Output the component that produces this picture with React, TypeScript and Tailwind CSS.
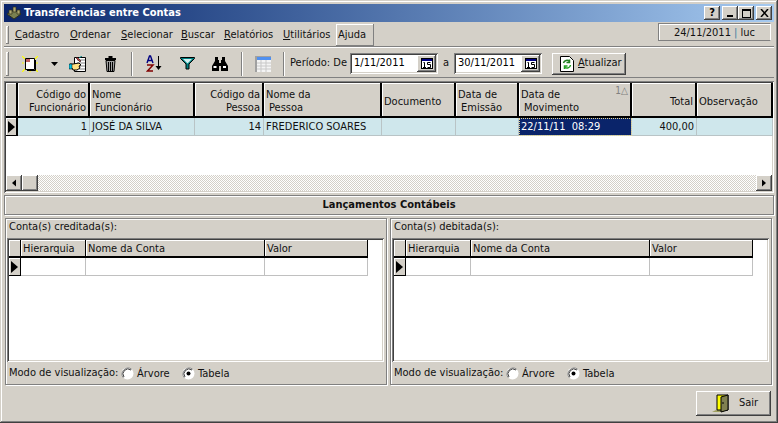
import React from "react";

const raised = "shadow-[inset_-1px_-1px_#404040,inset_1px_1px_#fff,inset_-2px_-2px_#808080]";
const thinUp = "shadow-[inset_-1px_-1px_#808080,inset_1px_1px_#fff]";
const sunken = "shadow-[inset_1px_1px_#808080,inset_-1px_-1px_#fff,inset_2px_2px_#404040,inset_-2px_-2px_#d4d0c8]";
const etched = "border border-[#808080] shadow-[inset_1px_1px_#fff,1px_1px_#fff]";

function Sep() {
  return <div className="w-[2px] h-[24px] shrink-0 border-l border-[#808080] bg-white" />;
}
function U({ c }: { c: string }) {
  return <span className="underline">{c}</span>;
}

function Arrow({ dir = "r", h = 12, w = 7 }: { dir?: "r" | "l"; h?: number; w?: number }) {
  return (
    <svg width={w} height={h} viewBox="0 0 7 12" className="block">
      <polygon points={dir === "r" ? "0,0 7,6 0,12" : "7,0 0,6 7,12"} fill="#000" />
    </svg>
  );
}

function CalBtn() {
  return (
    <div className={`w-[19px] h-[17px] ${raised} bg-[#d4d0c8] flex items-center justify-center shrink-0`}>
      <svg width="12" height="11" viewBox="0 0 12 11">
        <rect x="0.5" y="0.5" width="11" height="10" fill="#fff" stroke="#000" />
        <rect x="1" y="1" width="10" height="2" fill="#000080" />
        <path d="M2.500 4.500h1v5M2 9.500h3M6.500 4.500h3M6.500 4.500v2h3v3h-3" stroke="#000" fill="none" />
      </svg>
    </div>
  );
}

function DateField({ value }: { value: string }) {
  return (
    <div className={`w-[88px] h-[21px] bg-white flex items-center pl-[4px] pr-[2px] ${sunken}`}>
      <span className="flex-1 text-[11px] text-black">{value}</span>
      <CalBtn />
    </div>
  );
}

type Col = { w: number; a: string; b?: string; right?: boolean };
const cols: Col[] = [
  { w: 72, a: "Código do", b: "Funcionário", right: true },
  { w: 105, a: "Nome", b: "Funcionário" },
  { w: 69, a: "Código da", b: "Pessoa", right: true },
  { w: 118, a: "Nome da", b: "Pessoa" },
  { w: 74, a: "Documento" },
  { w: 63, a: "Data de", b: "Emissão" },
  { w: 113, a: "Data de", b: "Movimento" },
  { w: 65, a: "Total", right: true },
  { w: 76, a: "Observação" },
];
const cells = ["1", "JOSÉ DA SILVA", "14", "FREDERICO SOARES", "", "", "22/11/11  08:29", "400,00", ""];

function Header({ c, sort }: { c: Col; sort?: boolean }) {
  return (
    <div
      style={{ width: c.w }}
      className={`relative shrink-0 h-[35px] pt-[3px] bg-[#d4d0c8] border-r-2 border-b-2 border-black shadow-[inset_1px_1px_#fff] flex flex-col justify-center leading-[13px] text-[11px] text-[#111] px-[2px] ${c.right ? "items-end" : "items-start"}`}
    >
      <span>{c.a}</span>
      {c.b && <span className={c.right ? "" : "pl-[3px]"}>{c.b}</span>}
      {sort && (
        <span className="absolute right-[2px] top-[3px] text-[10px] leading-[10px] text-[#808080]">1△</span>
      )}
    </div>
  );
}

function MainGrid() {
  return (
    <div className={`h-[112px] bg-white ${sunken} p-[2px] mt-[3px] flex flex-col overflow-hidden`}>
      <div className="flex">
        <div className="w-[12px] h-[35px] bg-[#d4d0c8] border-r-2 border-b-2 border-black shadow-[inset_1px_1px_#fff] shrink-0" />
        {cols.map((c, i) => (
          <Header key={i} c={c} sort={i === 6} />
        ))}
      </div>
      <div className="flex h-[18px]">
        <div className="w-[12px] bg-[#d4d0c8] border-r-2 border-b border-black shadow-[inset_1px_1px_#fff] flex items-center justify-center shrink-0">
          <Arrow />
        </div>
        {cols.map((c, i) => (
          <div
            key={i}
            style={{ width: c.w }}
            className={`shrink-0 border-r border-b border-[#b9c4c6] text-[11px] leading-[16px] pt-[1px] px-[2px] whitespace-pre ${
              i === 6
                ? "bg-[#0a246a] text-white outline-1 outline-dotted outline-[#e8d890] -outline-offset-1"
                : "bg-[#cfe7ec] text-[#111]"
            } ${c.right ? "text-right" : ""}`}
          >
            {cells[i]}
          </div>
        ))}
      </div>
      <div className="flex-1" />
      <div className="h-[16px] flex bg-[repeating-conic-gradient(#d4d0c8_0_25%,#fff_0_50%)] bg-[length:2px_2px]">
        <div className={`w-[16px] bg-[#d4d0c8] ${raised} flex items-center justify-center`}>
          <Arrow dir="l" h={8} w={4} />
        </div>
        <div className={`w-[16px] bg-[#d4d0c8] ${raised}`} />
        <div className="flex-1" />
        <div className={`w-[16px] bg-[#d4d0c8] ${raised} flex items-center justify-center`}>
          <Arrow h={8} w={4} />
        </div>
      </div>
    </div>
  );
}

function SubHeader({ w, t }: { w: number; t: string }) {
  return (
    <div
      style={{ width: w }}
      className="shrink-0 h-[18px] pt-[1px] bg-[#d4d0c8] border-r border-b-2 border-black shadow-[inset_1px_1px_#fff] text-[11px] leading-[15px] text-[#111] px-[2px]"
    >
      {t}
    </div>
  );
}

function Radio({ on, label, w }: { on?: boolean; label: string; w: number }) {
  return (
    <div style={{ width: w }} className="flex items-center gap-[3px] shrink-0">
      <svg width="13" height="13" viewBox="0 0 13 13" className="shrink-0">
        <circle cx="6.500" cy="6.500" r="6" fill="#fff" />
        <path d="M2.300 10.700A6 6 0 0 1 10.700 2.300" stroke="#808080" fill="none" />
        <path d="M3 10A5 5 0 0 1 10 3" stroke="#404040" fill="none" />
        {on && <circle cx="6.500" cy="6.500" r="2" fill="#000" />}
      </svg>
      <span className="text-[11px] text-[#111] pt-[3px]">{label}</span>
    </div>
  );
}

function Panel({ title }: { title: string }) {
  return (
    <div className={`w-[382px] h-[167px] flex flex-col ${etched}`}>
      <div className="h-[19px] pl-[3px] text-[11px] leading-[16px] text-[#111]">{title}</div>
      <div className={`h-[124px] bg-white ml-[1px] mr-[2px] p-[2px] ${sunken}`}>
        <div className="flex">
          <div className="w-[12px] h-[18px] bg-[#d4d0c8] border-r border-b-2 border-black shadow-[inset_1px_1px_#fff] shrink-0" />
          <SubHeader w={65} t="Hierarquia" />
          <SubHeader w={179} t="Nome da Conta" />
          <SubHeader w={103} t="Valor" />
        </div>
        <div className="flex h-[18px]">
          <div className="w-[12px] bg-[#d4d0c8] border-r border-b border-black shadow-[inset_1px_1px_#fff] flex items-center justify-center shrink-0">
            <Arrow />
          </div>
          {[65, 179, 103].map((w, i) => (
            <div key={i} style={{ width: w }} className="shrink-0 border-r border-b border-[#c0c0c0]" />
          ))}
        </div>
      </div>
      <div className="flex items-center h-[22px] pl-[3px]">
        <span className="w-[112px] text-[11px] text-[#111] shrink-0">Modo de visualização:</span>
        <Radio label="Árvore" w={61} />
        <Radio on label="Tabela" w={60} />
      </div>
    </div>
  );
}

function NewIcon() {
  return (
    <svg width="16" height="16" viewBox="0 0 16 16">
      <path d="M0 0l3 3M16 0l-3 3M0 16l3-3M16 16l-3-3M8 14v2M0 7h2M14 7h2" stroke="#ffff00" strokeWidth="1.200" />
      <path d="M3.500 2.500h9v11h-9z" fill="#fff" stroke="#000" />
      <rect x="4" y="3" width="4" height="3" fill="#c06060" />
      <path d="M13.500 4v10.500H5" stroke="#000" fill="none" />
    </svg>
  );
}
function EditIcon() {
  return (
    <svg width="17" height="16" viewBox="0 0 17 16">
      <path d="M5.500 1.500h11v14h-11z" fill="#fff" stroke="#000" />
      <path d="M8 4h8M8 7h8M10 10h6M10 13h6" stroke="#808080" />
      <path d="M8 1l4 4-1 1-4-4z" fill="#c04040" stroke="#000" strokeWidth=".5" />
      <path d="M10 2l3-2" stroke="#008080" />
      <path d="M1 8h3l6-1 2 2-2 1 1 2-3 2H4l-1-2H1z" fill="#ffe080" stroke="#000" />
      <rect x="0" y="8" width="3" height="5" fill="#00c0e0" stroke="#000" strokeWidth=".5" />
    </svg>
  );
}
function TrashIcon() {
  return (
    <svg width="13" height="16" viewBox="0 0 13 16">
      <path d="M4.500 1h4M1 3h11" stroke="#000" strokeWidth="2" />
      <path d="M2 4.500h9l-1 11H3z" fill="#a0a0a0" stroke="#000" />
      <path d="M4.500 6v9M6.500 6v9M8.500 6v9" stroke="#000" />
    </svg>
  );
}
function AzIcon() {
  return (
    <svg width="17" height="17" viewBox="0 0 17 17">
      <path d="M1 8l2.500-7h1L7 8M2 5.500h4" stroke="#000080" strokeWidth="1.400" fill="none" />
      <path d="M1 10h6L1.500 16H7" stroke="#800000" strokeWidth="1.500" fill="none" />
      <path d="M12.500 1v11" stroke="#000" strokeWidth="1" />
      <path d="M9.500 11h6l-3 4z" fill="#000" />
    </svg>
  );
}
function FunnelIcon() {
  return (
    <svg width="15" height="13" viewBox="0 0 15 13">
      <path d="M0.500 0.500h14v1L9 7v5H6V7L0.500 1.500z" fill="#008080" stroke="#000" />
      <path d="M3 2h9L7.500 6.500z" fill="#d4f0f0" />
    </svg>
  );
}
function BinocularIcon() {
  return (
    <svg width="16" height="14" viewBox="0 0 16 14">
      <path d="M3 0h3v3h1v3h2V3h1V0h3v4l3 5v5H9V9H7v5H0V9l3-5z" fill="#000" />
      <rect x="1.500" y="9" width="3" height="2" fill="#fff" />
      <rect x="11" y="9" width="3" height="2" fill="#fff" />
    </svg>
  );
}
function TableIcon() {
  return (
    <svg width="16" height="16" viewBox="0 0 16 16">
      <rect x="0" y="0" width="16" height="16" fill="#a0a0a0" />
      <rect x="2" y="1" width="14" height="3" fill="#5090f0" />
      <rect x="2" y="4" width="14" height="12" fill="#f4f4f4" />
      <path d="M2 7h14M2 10h14M2 13h14M6 4v12M11 4v12" stroke="#c8c8c8" />
    </svg>
  );
}
function RefreshIcon() {
  return (
    <svg width="14" height="16" viewBox="0 0 14 16">
      <path d="M0.500 0.500h9l4 4v11h-13z" fill="#fff" stroke="#000" />
      <path d="M3.500 7a3.500 3.500 0 0 1 6-1.500M9.500 3.500v3h-3" stroke="#208020" strokeWidth="1.500" fill="none" />
      <path d="M10.500 9a3.500 3.500 0 0 1-6 2M4.500 13v-3h3" stroke="#20a020" strokeWidth="1.500" fill="none" />
    </svg>
  );
}
function DoorIcon() {
  return (
    <svg width="17" height="19" viewBox="0 0 17 19">
      <path d="M0 18l4-2h8v2z" fill="#a0a060" />
      <path d="M5 1h11v15H5z" fill="#ffff00" stroke="#000" />
      <path d="M9 3l7-2v15l-7 2z" fill="#808050" stroke="#000" />
      <rect x="10.500" y="8" width="1" height="2" fill="#000" />
    </svg>
  );
}

function ToolIcon({ w, children }: { w: number; children: React.ReactNode }) {
  return <div style={{ width: w }} className="h-[24px] flex items-center justify-center shrink-0">{children}</div>;
}

function WinBtn({ children }: { children: React.ReactNode }) {
  return (
    <div className={`w-[16px] h-[14px] bg-[#d4d0c8] ${raised} flex items-center justify-center shrink-0`}>
      {children}
    </div>
  );
}

export default function App() {
  return (
    <div
      className="w-[778px] h-[423px] bg-[#d4d0c8] p-[4px] overflow-hidden flex flex-col shadow-[inset_-1px_-1px_#404040,inset_1px_1px_#d4d0c8,inset_-2px_-2px_#808080,inset_2px_2px_#fff] text-[#111]"
      style={{ fontFamily: '"DejaVu Sans Condensed", "DejaVu Sans", sans-serif' }}
    >
      {/* Title bar */}
      <div className="h-[18px] bg-gradient-to-r from-[#0a246a] to-[#a6caf0] flex items-center pl-[2px] pr-[2px] shrink-0">
        <svg width="16" height="16" viewBox="0 0 16 16" className="shrink-0">
          <path d="M1 9l7-4 7 4-7 5z" fill="#7a8050" stroke="#30301a" />
          <path d="M3 5h3v4H3zM7 2h3v5H7zM11 5h3v4h-3z" fill="#b0a870" stroke="#30301a" strokeWidth=".7" />
        </svg>
        <span className="ml-[2px] text-white font-bold text-[11px] leading-[16px]">
          Transferências entre Contas
        </span>
        <div className="ml-auto flex items-center">
          <WinBtn>
            <span className="text-[11px] leading-[12px] font-bold text-black">?</span>
          </WinBtn>
          <div className="w-[2px]" />
          <WinBtn>
            <div className="w-[6px] h-[2px] bg-black mt-[6px]" />
          </WinBtn>
          <WinBtn>
            <div className="w-[9px] h-[9px] border border-black border-t-2" />
          </WinBtn>
          <div className="w-[2px]" />
          <WinBtn>
            <svg width="9" height="8" viewBox="0 0 9 8">
              <path d="M1 0l7 8M8 0l-7 8" stroke="#000" strokeWidth="1.500" />
            </svg>
          </WinBtn>
        </div>
      </div>

      {/* Menu */}
      <div className="h-[25px] flex items-end pl-[2px] pr-[3px] border-b border-[#808080] shrink-0">
        <div className={`w-[3px] h-[18px] mb-[2px] ${thinUp} shrink-0`} />
        <div className="flex items-center text-[11px] text-[#111] ml-[6px] h-[22px] whitespace-nowrap">
          <span className="w-[55px]"><U c="C" />adastro</span>
          <span className="w-[51px]"><U c="O" />rdenar</span>
          <span className="w-[60px]"><U c="S" />elecionar</span>
          <span className="w-[43px]"><U c="B" />uscar</span>
          <span className="w-[59px]"><U c="R" />elatórios</span>
          <span className="w-[53px]"><U c="U" />tilitários</span>
          <span className={`h-[22px] px-[2px] w-[38px] leading-[22px] ${thinUp}`}>Ajuda</span>
        </div>
        <div className="ml-auto w-[113px] h-[18px] mb-[5px] text-[11px] leading-[17px] text-center border border-[#808080] border-r-white shadow-[inset_1px_1px_#fff]">
          24/11/2011 <span className="text-[#4080a0]">|</span> luc
        </div>
      </div>

      {/* Toolbar */}
      <div className="h-[31px] flex items-center pt-[2px] pl-[2px] border-t border-white border-b border-b-[#808080] shrink-0">
        <div className={`w-[3px] h-[24px] ${thinUp} shrink-0`} />
        <ToolIcon w={41}><NewIcon /></ToolIcon>
        <svg width="7" height="4" viewBox="0 0 7 4" className="ml-[1px] shrink-0"><path d="M0 0h7L3.500 4z" fill="#000" /></svg>
        <ToolIcon w={38}><EditIcon /></ToolIcon>
        <ToolIcon w={28}><TrashIcon /></ToolIcon>
        <div className="w-[7px]" />
        <Sep />
        <ToolIcon w={42}><AzIcon /></ToolIcon>
        <ToolIcon w={24}><FunnelIcon /></ToolIcon>
        <ToolIcon w={42}><BinocularIcon /></ToolIcon>
        <Sep />
        <ToolIcon w={40}><TableIcon /></ToolIcon>
        <Sep />
        <span className="ml-[5px] w-[60px] text-[11px] shrink-0">Período: De</span>
        <DateField value="1/11/2011" />
        <span className="w-[16px] text-center text-[11px] shrink-0">a</span>
        <DateField value="30/11/2011" />
        <div className={`ml-[10px] w-[74px] h-[22px] bg-[#d4d0c8] ${raised} flex items-center pl-[8px] gap-[4px] text-[11px]`}>
          <RefreshIcon />
          <span><U c="A" />tualizar</span>
        </div>
      </div>

      <MainGrid />

      {/* Section title */}
      <div className={`h-[20px] mt-[2px] ${etched} flex items-center justify-center font-bold text-[11px] shrink-0`}>
        Lançamentos Contábeis
      </div>

      {/* Panels */}
      <div className="flex mt-[3px] ml-[1px] gap-[3px] shrink-0">
        <Panel title="Conta(s) creditada(s):" />
        <Panel title="Conta(s) debitada(s):" />
      </div>

      {/* Footer */}
      <div className="flex justify-end pr-[3px] mt-[6px]">
        <div className={`w-[75px] h-[25px] bg-[#d4d0c8] ${raised} flex items-center pl-[16px] gap-[10px] text-[11px]`}>
          <DoorIcon />
          <span>Sair</span>
        </div>
      </div>
    </div>
  );
}
